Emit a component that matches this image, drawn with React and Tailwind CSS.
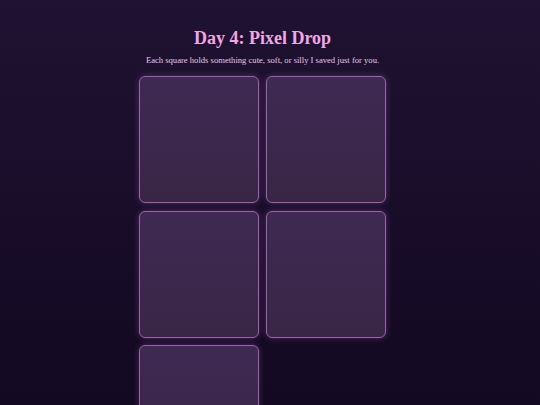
export default function App() {
  const squares = [1, 2, 3, 4, 5];

  return (
    <div className="min-h-screen bg-gradient-to-b from-[#1f1232] via-[#170c28] to-[#10071c]">
      <div
        className="flex w-[525px] flex-col items-center pt-[27px] pb-10"
        style={{ fontFamily: '"Liberation Serif", Georgia, serif' }}
      >
        <h1 className="text-[18px] font-bold leading-[22px] text-[#f2a6e4]">
          Day 4: Pixel Drop
        </h1>
        <p className="mt-[5px] text-[8.6px] leading-[12px] text-[#e6c6e8]">
          Each square holds something cute, soft, or silly I saved just for you.
        </p>

        <div className="mt-[10px] grid grid-cols-[120px_120px] gap-x-[7px] gap-y-[7.5px]">
          {squares.map((n) => (
            <div
              key={n}
              className="h-[127px] rounded-[6px] border border-[#9a64aa] bg-gradient-to-b from-[#3e2a52] to-[#392646] shadow-[0_0_6px_rgba(214,120,214,0.3)]"
            />
          ))}
        </div>
      </div>
    </div>
  );
}
